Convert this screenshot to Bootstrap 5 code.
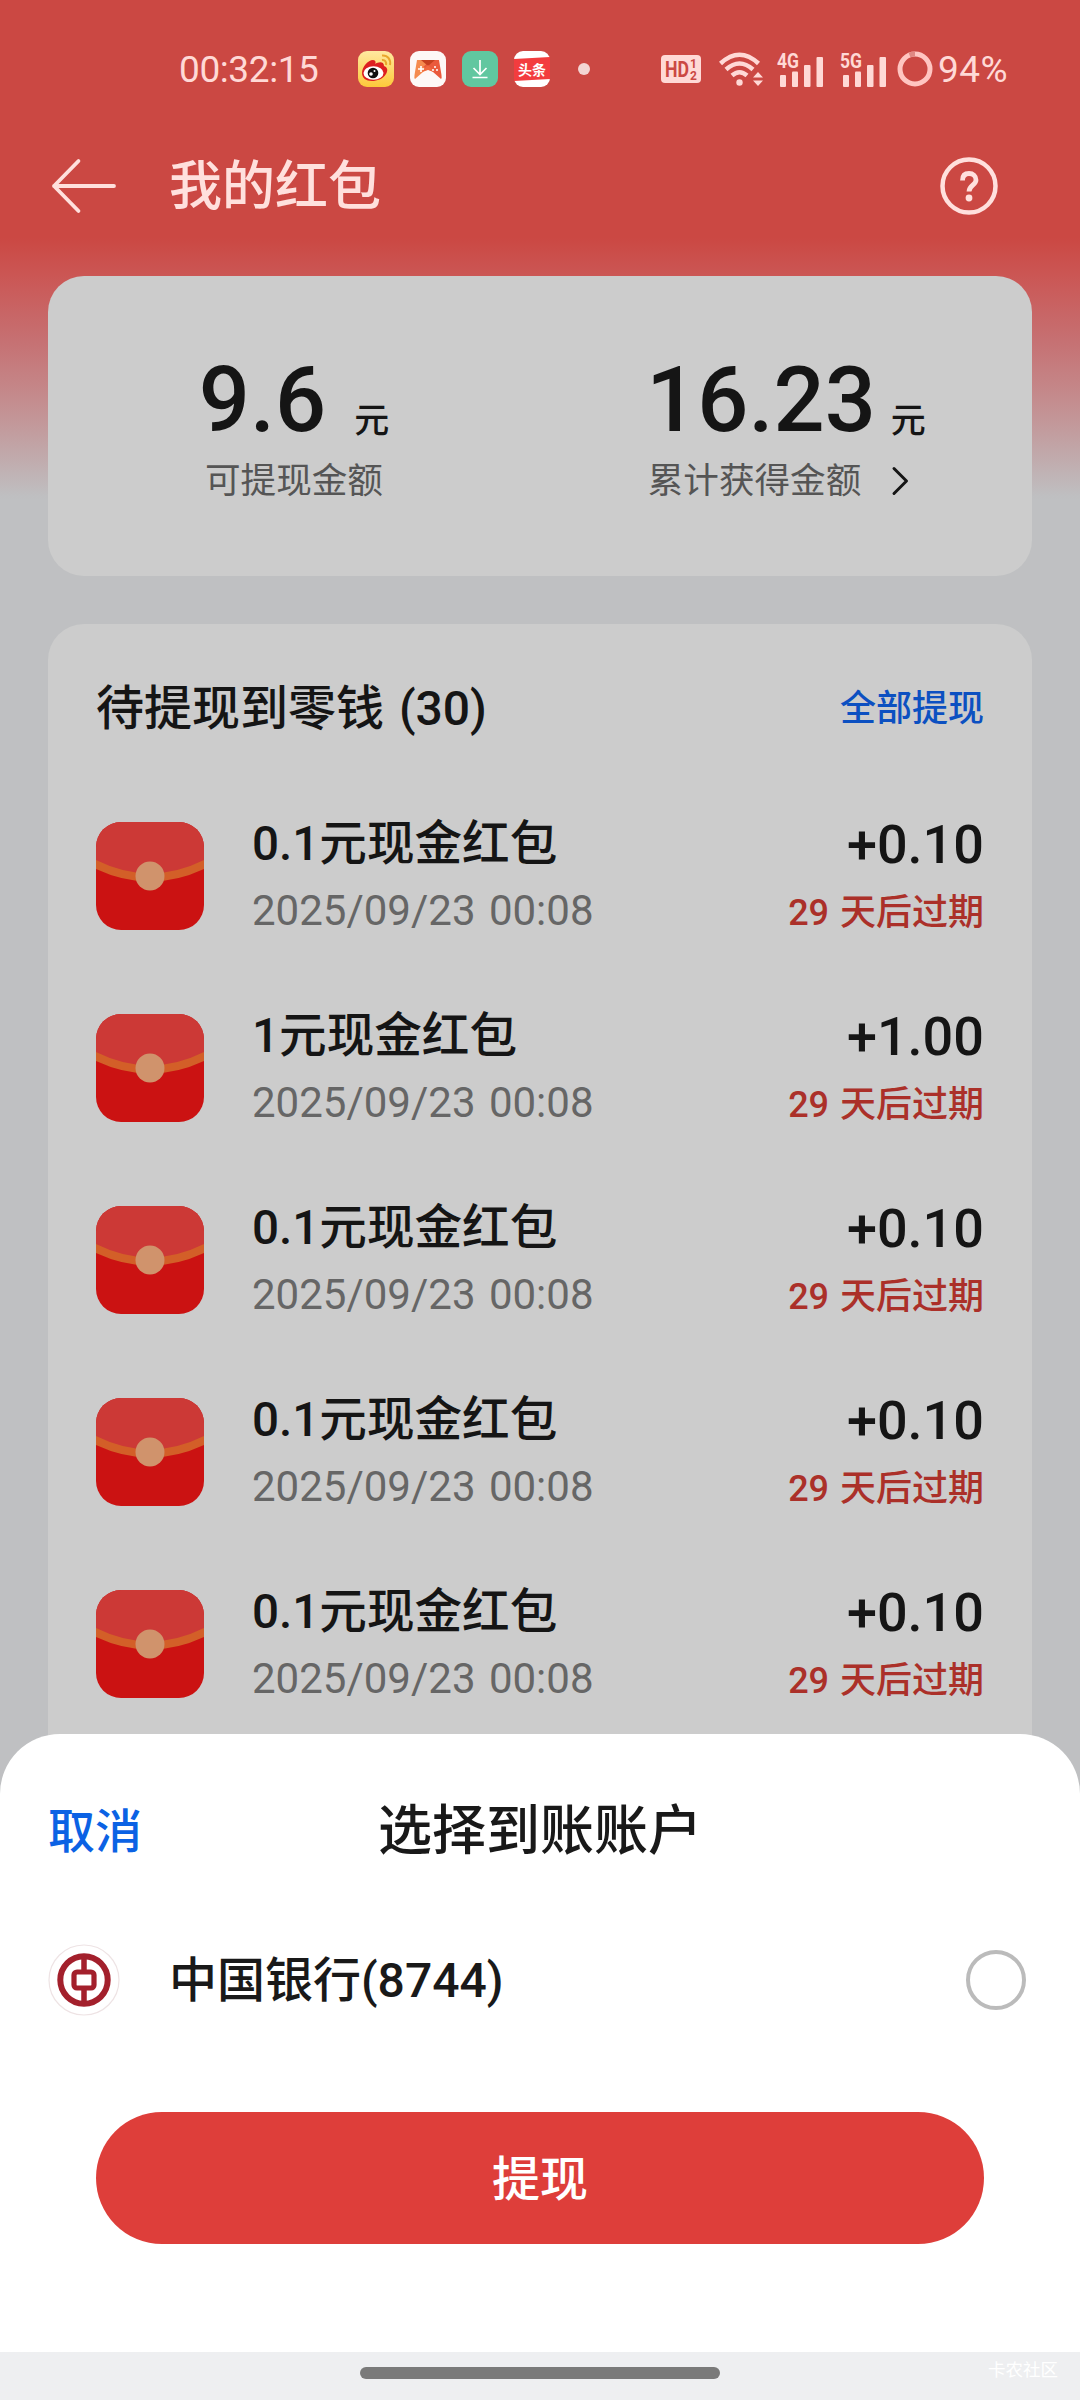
<!DOCTYPE html>
<html lang="zh-CN">
<head>
<meta charset="utf-8">
<meta name="viewport" content="width=device-width, initial-scale=1">
<title>我的红包</title>
<link href="https://cdn.jsdelivr.net/npm/bootstrap@5.3.0/dist/css/bootstrap.min.css" rel="stylesheet">
<style>
  body { font-family: Roboto, "Noto Sans CJK SC", sans-serif; color: #151515; background: #bfc0c2; }
  .phone { width: 1080px; height: 2400px; background: linear-gradient(#cb4843 0, #cb4843 238px, #cb5654 275px, #c67072 340px, #c48c8e 400px, #c1a6a8 450px, #bfbfc1 496px, #bfc0c2 500px); }
  .status { height: 138px; padding-left: 179px; color: #ffd9d6; font-size: 37px; line-height: 1; }
  .clock { width: 139px; letter-spacing: -.4px; }
  .appicons { margin-left: 40px; gap: 16px; }
  .more-dot { margin-left: 12px; }
  .hd { margin-left: 71px; }
  .wifi { margin-left: 18px; }
  .sig { margin-left: 13px; overflow: visible; }
  .sig + .sig { margin-left: 17px; }
  .ring { margin-left: 11px; }
  .pct { margin-left: 5px; letter-spacing: .5px; }
  .head { height: 96px; padding: 0 80px 0 51px; color: #ffe0dd; }
  .head h1 { font-size: 53px; font-weight: 500; line-height: 1; margin: 3px 0 0 52px; }
  .panel { background: #ccc; border-radius: 36px; margin: 0 48px; }
  .sum { height: 300px; margin-top: 42px; padding-top: 75px; }
  .num { font-size: 90px; font-weight: 500; line-height: 100px; height: 100px; }
  .unit { font-size: 35px; font-weight: 500; line-height: 1; position: relative; top: 2px; }
  .gap-a { margin-left: 28px; }
  .gap-b { margin-left: 15px; }
  .cap { font-size: 35.6px; line-height: 54px; color: #555; padding-top: 3px; }
  .cap-link { padding-right: 14px; }
  .chev { margin-left: 29px; }
  .list { margin-top: 48px; padding: 0 48px; height: 1160px; }
  .list-top { height: 166px; padding-top: 4px; }
  .t48 { font-size: 48px; font-weight: 500; line-height: 1; word-spacing: 3px; }
  .linkblue { font-size: 36px; font-weight: 500; color: #0c50c1; text-decoration: none; line-height: 1; }
  .item { height: 192px; padding-top: 18px; }
  .env { margin: 14px 48px 0 0; }
  .item-title { font-size: 47.6px; line-height: 64px; margin-top: 4px; }
  .when { font-size: 42px; line-height: 50px; color: #666; margin-top: 10px; word-spacing: 3px; }
  .amt { font-size: 54px; font-weight: 500; line-height: 64px; margin-top: 5px; }
  .due { font-size: 36px; font-weight: 500; line-height: 50px; color: #ab3029; margin-top: 11px; word-spacing: 2px; }
  .sheet { height: 666px; background: #fff; border-radius: 60px 60px 0 0; color: #191919; }
  .sheet-top { height: 192px; padding: 3px 0 0 48px; }
  .sheet-top .side { width: 220px; color: #0b62e4; font-size: 47px; }
  .sheet-top h2 { font-size: 54px; font-weight: 500; line-height: 1; padding-right: 268px; }
  .bank { height: 108px; padding: 0 54px 0 48px; }
  .bank-name { margin: 2px 0 0 49px; }
  .radio { width: 60px; height: 60px; border: 4px solid #bbb; }
  .go { height: 132px; margin: 78px 96px 0; padding: 3px 0 0; background: #de3e3a; color: #fff; border: 0; border-radius: 66px; }
  .go:hover { background: #c93430; color: #fff; }
  .home { height: 48px; background: #eeeff1; }
  .pill { width: 360px; height: 12px; background: #7a7a7a; border-radius: 6px; margin-top: 7px; }
  .wm { right: 22px; font-size: 17.5px; color: #fff; line-height: 1; top: 10px; }
</style>
</head>
<body>
<svg width="0" height="0" class="position-absolute" aria-hidden="true">
  <symbol id="envelope" viewBox="0 0 108 108">
    <clipPath id="ec"><rect width="108" height="108" rx="25"/></clipPath>
    <g clip-path="url(#ec)">
      <rect width="108" height="108" fill="#cb1212"/>
      <path d="M0 0H108V42Q54 68 0 42Z" fill="#cc3936"/>
      <path d="M-4 40.500Q54 70.500 112 40.500" fill="none" stroke="#d35f28" stroke-width="8"/>
    </g>
    <circle cx="54" cy="54" r="14.500" fill="#d0936c"/>
  </symbol>
  <symbol id="bars" viewBox="0 0 46 36">
    <g fill="#ffd9d6"><rect x="3" y="24" width="6" height="12" rx="1"/><rect x="15" y="20.500" width="6" height="15.500" rx="1"/><rect x="27" y="14" width="6.500" height="22" rx="1"/><rect x="39.500" y="6" width="6.500" height="30" rx="1"/></g>
  </symbol>
</svg>

<div class="phone position-relative overflow-hidden">
  <div class="status d-flex align-items-center">
    <span class="clock">00:32:15</span>
    <div class="appicons d-flex align-items-center">
      <svg width="36" height="36" viewBox="0 0 36 36">
        <defs><linearGradient id="wy" x1="0" y1="0" x2="0" y2="1"><stop offset="0" stop-color="#ffe9a0"/><stop offset="1" stop-color="#fdc93a"/></linearGradient></defs>
        <rect width="36" height="36" rx="9" fill="url(#wy)"/>
        <path d="M4 22C4 16 10 9 15 9C18 9 18 12 17 13C20 11 26 10 26 15C31 17 29 21 28 23C25 28 19 30 14 30C8 30 4 27 4 22Z" fill="#dd1f21"/>
        <ellipse cx="15.500" cy="22" rx="10" ry="6.800" fill="#fff"/>
        <circle cx="15" cy="22" r="5.300" fill="#111"/><circle cx="13" cy="23" r="1.800" fill="#fff"/><circle cx="16.500" cy="20" r="1" fill="#fff"/>
        <path d="M24 4.500C30 4 33 9 32 14M24 9C27 8.500 28.500 11 28 14" fill="none" stroke="#e9a62c" stroke-width="2"/>
      </svg>
      <svg width="36" height="36" viewBox="0 0 36 36">
        <rect width="36" height="36" rx="9" fill="#fdf8f6"/>
        <path d="M7 9H15L23 16L13 21L5 28Q4 27 4.500 24Z" fill="#f58b4e"/>
        <path d="M29 9H21L13 16L23 21L31 28Q32 27 31.500 24Z" fill="#ea5a3c"/>
        <path d="M11 9H25L18 15Z" fill="#c6401f"/><path d="M18 14L11 21L18 19L25 21Z" fill="#f0683d"/>
        <path d="M11 15V21M8 18H14" stroke="#fff" stroke-width="1.600"/><g fill="#fff"><circle cx="25" cy="16" r="1"/><circle cx="23" cy="19" r="1"/><circle cx="27" cy="19" r="1"/></g>
      </svg>
      <svg width="36" height="36" viewBox="0 0 36 36"><rect width="36" height="36" rx="9" fill="#61c7a0"/><path d="M18 9V23M11.500 17L18 23.500L24.500 17M10.500 26.500H25.500" fill="none" stroke="#fff" stroke-width="1.700"/></svg>
      <svg width="36" height="36" viewBox="0 0 36 36"><rect width="36" height="36" rx="9" fill="#fff"/><path d="M0 8L36 6V28L0 30Z" fill="#f33c3e"/><text x="18" y="23.500" font-size="14" font-weight="700" text-anchor="middle" fill="#fff" font-family="Noto Sans CJK SC, sans-serif">头条</text></svg>
      <svg width="12" height="12" class="more-dot"><circle cx="6" cy="6" r="6" fill="#f3d5d3"/></svg>
    </div>
    <svg class="hd" width="40" height="28" viewBox="0 0 40 28"><rect width="40" height="28" rx="4" fill="#ffd9d6"/><g fill="#cb4843" font-family="Roboto, sans-serif" font-weight="700"><text x="4" y="21.500" font-size="21.500" textLength="24" lengthAdjust="spacingAndGlyphs">HD</text><text x="29" y="13" font-size="12">1</text><text x="29" y="24.500" font-size="12">2</text></g></svg>
    <svg class="wifi" width="45" height="34" viewBox="0 0 45 34"><g fill="none" stroke="#ffd9d6" stroke-width="4.500"><path d="M1.500 11.500Q20.500 -6 39.500 11.500"/><path d="M7 17.500Q20.500 5.500 34 17.500"/><path d="M13 23.500Q20.500 17 28 23.500"/></g><circle cx="20.500" cy="30.500" r="3.200" fill="#ffd9d6"/><path d="M34 25.500L39 20L44 25.500ZM34 28.500L39 34L44 28.500Z" fill="#ffd9d6"/></svg>
    <svg class="sig" width="46" height="42" viewBox="0 -4 46 42"><use href="#bars" width="46" height="36" y="-1"/><text x="0" y="16" font-size="20" font-weight="700" fill="#ffd9d6" font-family="Roboto, sans-serif" textLength="22" lengthAdjust="spacingAndGlyphs">4G</text></svg>
    <svg class="sig" width="46" height="42" viewBox="0 -4 46 42"><use href="#bars" width="46" height="36" y="-1"/><text x="0" y="16" font-size="20" font-weight="700" fill="#ffd9d6" font-family="Roboto, sans-serif" textLength="22" lengthAdjust="spacingAndGlyphs">5G</text></svg>
    <svg class="ring" width="36" height="36"><circle cx="18" cy="18" r="15" fill="none" stroke="#ffc5c1" stroke-width="5"/><path d="M12.500 4A15 15 0 0 1 18 3" fill="none" stroke="#e08883" stroke-width="5"/></svg>
    <span class="pct">94%</span>
  </div>

  <div class="head d-flex align-items-center">
    <svg width="66" height="56" viewBox="0 0 66 56" fill="none" stroke="currentColor" stroke-width="3.800" stroke-linecap="round" stroke-linejoin="round"><path d="M63 28H3M27.500 3L3 28L27.500 53"/></svg>
    <h1>我的红包</h1>
    <svg class="ms-auto" width="62" height="62" viewBox="0 0 62 62" fill="none" stroke="currentColor"><circle cx="31" cy="31" r="26.500" stroke-width="4.500"/><path d="M24.500 25.500C24.500 20.500 27 18.500 31 18.500C35 18.500 38 21 38 25C38 30 31 30.500 31 36.500" stroke-width="4.800"/><circle cx="31" cy="43" r="3.400" fill="currentColor" stroke="none"/></svg>
  </div>

  <div class="panel sum">
    <div class="row g-0 text-center">
      <div class="col-6">
        <div class="num d-flex justify-content-center align-items-baseline"><span>9.6</span><span class="unit gap-a">元</span></div>
        <div class="cap">可提现金额</div>
      </div>
      <div class="col-6">
        <div class="num d-flex justify-content-center align-items-baseline"><span>16.23</span><span class="unit gap-b">元</span></div>
        <div class="cap cap-link d-flex justify-content-center align-items-center"><span>累计获得金额</span><svg class="chev" width="20" height="32" viewBox="0 0 20 32" fill="none" stroke="#151515" stroke-width="3" stroke-linecap="round" stroke-linejoin="round"><path d="M4 3.500L16.500 16L4 28.500"/></svg></div>
      </div>
    </div>
  </div>

  <div class="panel list">
    <div class="list-top d-flex justify-content-between align-items-center"><span class="t48">待提现到零钱 (30)</span><a class="linkblue" href="#">全部提现</a></div>
    <div class="item d-flex"><svg class="env" width="108" height="108"><use href="#envelope"/></svg><div><div class="t48 item-title">0.1元现金红包</div><div class="when">2025/09/23 00:08</div></div><div class="ms-auto text-end"><div class="amt">+0.10</div><div class="due">29 天后过期</div></div></div>
    <div class="item d-flex"><svg class="env" width="108" height="108"><use href="#envelope"/></svg><div><div class="t48 item-title">1元现金红包</div><div class="when">2025/09/23 00:08</div></div><div class="ms-auto text-end"><div class="amt">+1.00</div><div class="due">29 天后过期</div></div></div>
    <div class="item d-flex"><svg class="env" width="108" height="108"><use href="#envelope"/></svg><div><div class="t48 item-title">0.1元现金红包</div><div class="when">2025/09/23 00:08</div></div><div class="ms-auto text-end"><div class="amt">+0.10</div><div class="due">29 天后过期</div></div></div>
    <div class="item d-flex"><svg class="env" width="108" height="108"><use href="#envelope"/></svg><div><div class="t48 item-title">0.1元现金红包</div><div class="when">2025/09/23 00:08</div></div><div class="ms-auto text-end"><div class="amt">+0.10</div><div class="due">29 天后过期</div></div></div>
    <div class="item d-flex"><svg class="env" width="108" height="108"><use href="#envelope"/></svg><div><div class="t48 item-title">0.1元现金红包</div><div class="when">2025/09/23 00:08</div></div><div class="ms-auto text-end"><div class="amt">+0.10</div><div class="due">29 天后过期</div></div></div>
  </div>

  <div class="sheet position-absolute bottom-0 start-0 w-100 d-flex flex-column">
    <div class="sheet-top d-flex align-items-center">
      <a class="side t48 text-decoration-none" href="#">取消</a>
      <h2 class="flex-grow-1 text-center mb-0">选择到账账户</h2>
    </div>
    <div class="bank d-flex align-items-center">
      <svg width="72" height="72" viewBox="0 0 72 72" fill="none" stroke="#a3202c"><circle cx="36" cy="36" r="35" stroke="#eee3e4" stroke-width="1.200"/><circle cx="36" cy="36" r="23.700" stroke-width="6"/><path d="M36 12V26M36 46V60" stroke-width="5.500"/><rect x="26" y="28" width="20" height="16" rx="3" stroke-width="5.200"/></svg>
      <span class="t48 bank-name">中国银行(8744)</span>
      <span class="radio rounded-circle ms-auto"></span>
    </div>
    <button class="go btn t48" type="button">提现</button>
    <div class="home mt-auto position-relative d-flex align-items-start justify-content-center pt-2"><div class="pill"></div><span class="wm position-absolute">卡农社区</span></div>
  </div>
</div>
<script src="https://cdn.jsdelivr.net/npm/bootstrap@5.3.0/dist/js/bootstrap.bundle.min.js"></script>
</body>
</html>
